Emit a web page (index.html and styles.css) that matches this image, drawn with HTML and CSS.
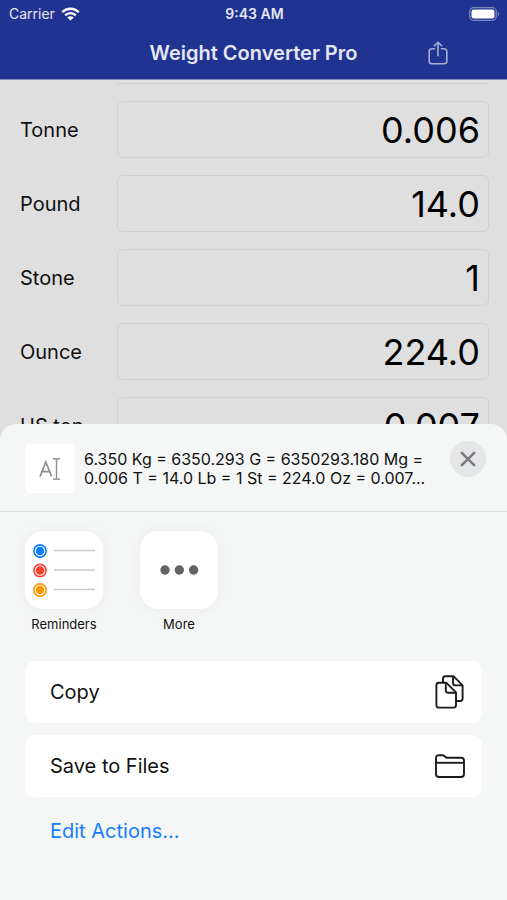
FILE: index.html
```html
<!DOCTYPE html>
<html lang="en">

<head>
    <meta charset="UTF-8">
    <meta name="viewport" content="width=device-width, initial-scale=1.0">
    <title>Weight Converter Pro</title>
    <link rel="stylesheet" href="styles.css">
</head>

<body>

    <header class="top-bar">
        <div class="status">
            <div class="status-left">
                <span>Carrier</span>
                <svg width="19" height="14" viewBox="0 0 19 14">
                    <g fill="none" stroke="#fff" stroke-width="2.4">
                        <path d="M1.2 5.2 C5.8 .6 13.2 .6 17.8 5.2"/>
                        <path d="M4.2 8.3 C7.1 5.4 11.9 5.4 14.8 8.3"/>
                    </g>
                    <path d="M6.3 10.4 C8.1 8.8 10.9 8.8 12.7 10.4 L9.5 13.6 Z" fill="#fff"/>
                </svg>
            </div>
            <span class="status-time">9:43 AM</span>
            <div class="status-right">
                <svg width="31" height="14" viewBox="0 0 31 14">
                    <rect x=".7" y=".7" width="26.6" height="12.6" rx="4" fill="none" stroke="#7d88c0" stroke-width="1.2"/>
                    <rect x="2.5" y="2.5" width="23" height="9" rx="2.2" fill="#fff"/>
                    <path d="M28.8 4.8 C30.6 5.5 30.6 8.5 28.8 9.2 Z" fill="#7d88c0"/>
                </svg>
            </div>
        </div>
        <div class="title-bar">
            <h1>Weight Converter Pro</h1>
            <button class="share-button" aria-label="Share">
                <svg width="20" height="24" viewBox="0 0 20 24" fill="none" stroke="#a6aed6" stroke-width="1.6" stroke-linecap="round" stroke-linejoin="round">
                    <path d="M6.5 7.8 H4 C2.2 7.8 1.2 8.8 1.2 10.6 V20 C1.2 21.8 2.2 22.8 4 22.8 H16 C17.8 22.8 18.8 21.8 18.8 20 V10.6 C18.8 8.8 17.8 7.8 16 7.8 H13.5"/>
                    <path d="M10 14.8 V1.4 M6.3 4.8 L10 1.2 L13.7 4.8"/>
                </svg>
            </button>
        </div>
    </header>

    <main class="units">
        <div class="field-edge"></div>
        <div class="unit-row">
            <label for="tonne">Tonne</label>
            <input type="text" id="tonne" value="0.006">
        </div>
        <div class="unit-row">
            <label for="pound">Pound</label>
            <input type="text" id="pound" value="14.0">
        </div>
        <div class="unit-row">
            <label for="stone">Stone</label>
            <input type="text" id="stone" value="1">
        </div>
        <div class="unit-row">
            <label for="ounce">Ounce</label>
            <input type="text" id="ounce" value="224.0">
        </div>
        <div class="unit-row">
            <label for="us-ton">US ton</label>
            <input type="text" id="us-ton" value="0.007">
        </div>
    </main>

    <section class="share-sheet">
        <div class="sheet-head">
            <div class="text-thumb">
                <svg width="22" height="24" viewBox="0 0 22 24" fill="none" stroke="#8e8e8e" stroke-width="1.4">
                    <path d="M1 19.5 L6.8 5 L12.6 19.5 M3 14.6 H10.6" stroke-width="1.7"/>
                    <path d="M14 1.7 H16 C17 1.7 17.5 2.2 17.5 3 C17.5 2.2 18 1.7 19 1.7 H21 M17.5 3 V21 M14 22.3 H16 C17 22.3 17.5 21.8 17.5 21 C17.5 21.8 18 22.3 19 22.3 H21"/>
                </svg>
            </div>
            <p class="share-text">6.350 Kg = 6350.293 G = 6350293.180 Mg =<br>0.006 T = 14.0 Lb = 1 St = 224.0 Oz = 0.007...</p>
            <button class="close-button" aria-label="Close">
                <svg width="16" height="16" viewBox="0 0 16 16" fill="none" stroke="#7b7b7e" stroke-width="2.6" stroke-linecap="round">
                    <path d="M1.8 1.8 L14.2 14.2 M14.2 1.8 L1.8 14.2"/>
                </svg>
            </button>
        </div>

        <div class="apps">
            <button class="app">
                <span class="app-icon">
                    <svg width="78" height="78" viewBox="0 0 78 78">
                        <g stroke="#c9c9cb" stroke-width="1.4">
                            <path d="M29 19.5 H70 M29 39 H70 M29 58.5 H70"/>
                        </g>
                        <g fill="#fff" stroke-width="1.6">
                            <circle cx="15" cy="20" r="6.1" stroke="#0a7aff"/>
                            <circle cx="15" cy="39.5" r="6.1" stroke="#ff3b30"/>
                            <circle cx="15" cy="59" r="6.1" stroke="#ff9500"/>
                        </g>
                        <circle cx="15" cy="20" r="4.2" fill="#0a7aff"/>
                        <circle cx="15" cy="39.5" r="4.2" fill="#ff3b30"/>
                        <circle cx="15" cy="59" r="4.2" fill="#ff9500"/>
                    </svg>
                </span>
                Reminders
            </button>
            <button class="app">
                <span class="app-icon">
                    <svg width="78" height="78" viewBox="0 0 78 78" fill="#636366">
                        <circle cx="25" cy="39" r="4.7"/>
                        <circle cx="39.3" cy="39" r="4.7"/>
                        <circle cx="53.6" cy="39" r="4.7"/>
                    </svg>
                </span>
                More
            </button>
        </div>

        <div class="actions">
            <button class="action">
                Copy
                <svg width="30" height="34" viewBox="0 0 30 34" fill="#fff" stroke="#1c1c1e" stroke-width="1.9" stroke-linejoin="round">
                    <path d="M10.5 1.2 H18.5 L27.6 10.3 V23.5 C27.6 25.3 26.8 26 25.1 26 H10.5 C8.8 26 8 25.3 8 23.5 V3.7 C8 2 8.8 1.2 10.5 1.2 Z"/>
                    <path d="M18 1.5 V8 C18 9.6 18.8 10.4 20.4 10.4 H27.2" fill="none"/>
                    <path d="M4 7.8 H11.4 L21 17.4 V30 C21 31.8 20.2 32.6 18.5 32.6 H4 C2.3 32.6 1.4 31.8 1.4 30 V10.3 C1.4 8.6 2.3 7.8 4 7.8 Z"/>
                    <path d="M10.8 8 V15.2 C10.8 16.9 11.6 17.7 13.2 17.7 H20.6" fill="none"/>
                </svg>
            </button>
            <button class="action">
                Save to Files
                <svg width="30" height="24" viewBox="1 1 30 24" fill="none" stroke="#1c1c1e" stroke-width="1.9" stroke-linejoin="round">
                    <path d="M2 21 V5 C2 3.2 3 2.2 4.8 2.2 H8.6 C10.8 2.2 11 4.8 13.2 4.8 H27 C29 4.8 30 5.8 30 7.6 V21 C30 23 29 24 27 24 H5 C3 24 2 23 2 21 Z"/>
                    <path d="M2 9.8 H30"/>
                </svg>
            </button>
            <a class="edit-link" href="#">Edit Actions...</a>
        </div>
    </section>

</body>

</html>
```
FILE: styles.css
```css
* {
    box-sizing: border-box;
}

body {
    font-family: Inter, "Liberation Sans", sans-serif;
    background-color: #dfdfdf;
    color: #111;
    margin: 0;
    height: 100vh;
    overflow: hidden;
}

button {
    font-family: inherit;
    color: inherit;
    background: none;
    border: none;
    padding: 0;
    cursor: pointer;
}

svg {
    display: block;
    flex-shrink: 0;
}

.top-bar {
    background-color: #203390;
    color: #e4e6f4;
    border-bottom: 1px solid #8490c8;
}

.status {
    display: grid;
    grid-template-columns: 1fr auto 1fr;
    align-items: center;
    height: 26px;
    padding: 1px 7px 0 9px;
    font-size: 14px;
}

.status-left {
    display: flex;
    align-items: center;
    gap: 6px;
}

.status-time {
    font-weight: 600;
}

.status-right {
    display: flex;
    justify-content: flex-end;
}

.title-bar {
    display: grid;
    grid-template-columns: 1fr auto 1fr;
    align-items: center;
    height: 53px;
}

.title-bar h1 {
    grid-column: 2;
    margin: 0;
    font-size: 20px;
    font-weight: 600;
}

.share-button {
    justify-self: center;
    padding-left: 12px;
}

.units {
    display: flex;
    flex-direction: column;
    gap: 17px;
    padding: 0 18px 0 20px;
}

.field-edge {
    height: 4px;
    margin-left: 97px;
    border-bottom: 1px solid #cfcfd2;
}

.unit-row {
    display: flex;
    align-items: center;
    font-size: 20px;
}

.unit-row label {
    width: 97px;
}

.unit-row input {
    flex: 1;
    min-width: 0;
    height: 57px;
    padding: 0 8px;
    border: 1px solid #d1d1d2;
    border-radius: 6px;
    background: none;
    color: #000;
    font-family: inherit;
    font-size: 36px;
    text-align: right;
}

.share-sheet {
    position: fixed;
    left: 0;
    right: 0;
    bottom: 0;
    background-color: #f5f6f6;
    border-radius: 16px 16px 0 0;
}

.sheet-head {
    display: flex;
    align-items: flex-start;
    padding: 17px 21px 18px 25px;
    border-bottom: 1px solid #dfe0e0;
}

.text-thumb {
    display: flex;
    align-items: center;
    justify-content: center;
    width: 50px;
    height: 49px;
    margin-top: 3px;
    border-radius: 5px;
    background-color: #fff;
}

.share-text {
    flex: 1;
    margin: 9px 0 0 9px;
    font-size: 16px;
    line-height: 19px;
    white-space: nowrap;
}

.close-button {
    display: flex;
    align-items: center;
    justify-content: center;
    width: 36px;
    height: 36px;
    border-radius: 50%;
    background-color: #e5e6e7;
}

.apps {
    display: flex;
    gap: 37px;
    padding: 19px 25px 0;
}

.app {
    display: flex;
    flex-direction: column;
    align-items: center;
    gap: 6px;
    width: 78px;
    font-size: 13px;
    line-height: 18px;
}

.app-icon {
    border-radius: 18px;
    background-color: #fff;
    box-shadow: 0 0 12px rgba(0, 0, 0, 0.05);
}

.actions {
    display: flex;
    flex-direction: column;
    gap: 12px;
    padding: 28px 25px 55px;
}

.action {
    display: flex;
    align-items: center;
    justify-content: space-between;
    height: 62px;
    padding: 0 17px 0 25px;
    border-radius: 10px;
    background-color: #fff;
    font-size: 20px;
}

.edit-link {
    align-self: flex-start;
    margin: 8px 25px 0;
    color: #147efb;
    font-size: 20px;
    line-height: 28px;
    text-decoration: none;
}
```
